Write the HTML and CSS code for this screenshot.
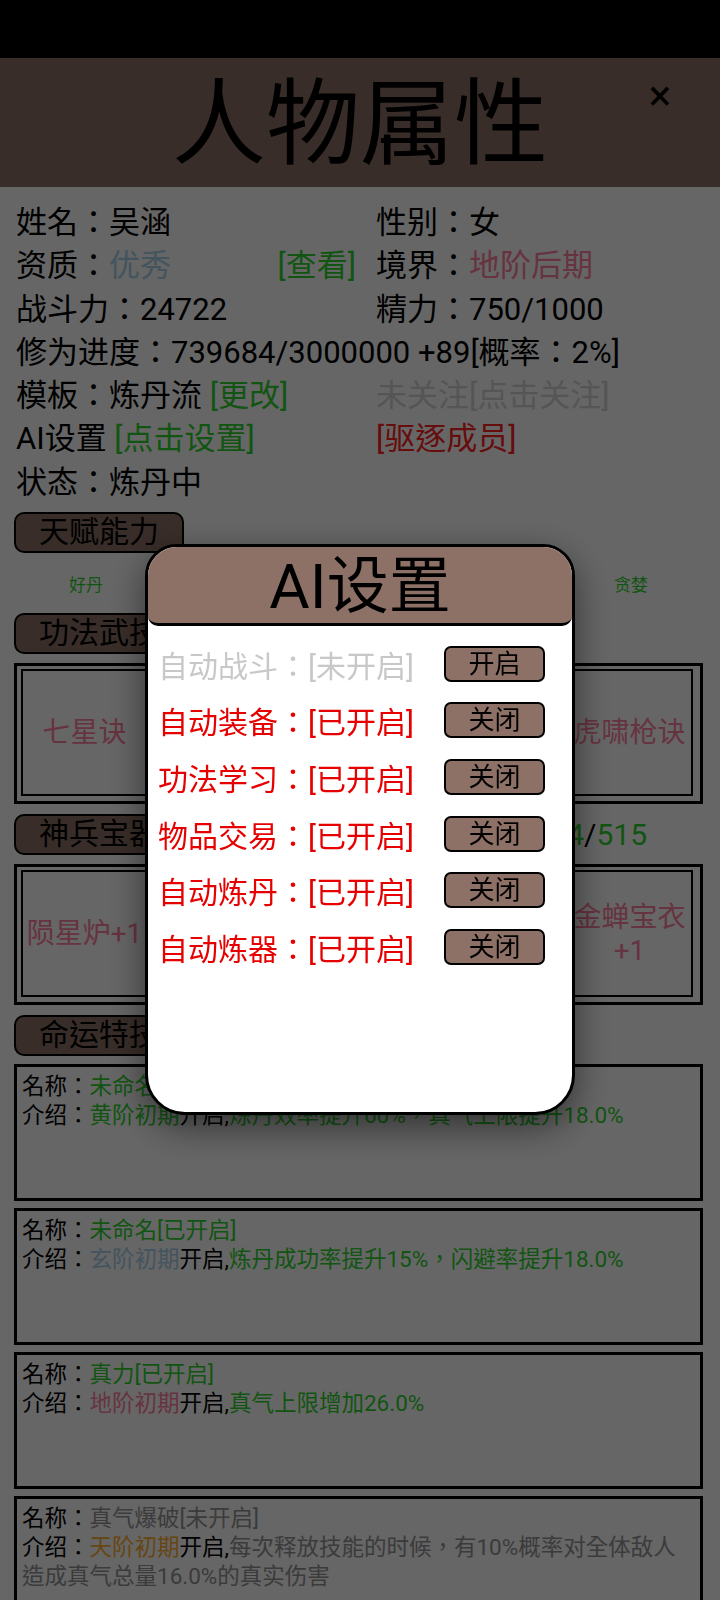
FILE: index.html
```html
<!DOCTYPE html>
<html lang="zh-TW">
<head>
    <meta charset="UTF-8">
    <meta name="viewport" content="width=device-width, initial-scale=1.0">
    <title>人物属性</title>
    <link rel="stylesheet" href="styles.css">
</head>
<body>
    <div class="status-bar"></div>

    <div class="title-bar">
        <span></span>
        <h1 class="title">人物属性</h1>
        <span class="close">×</span>
    </div>

    <div class="scroll">
        <div class="info">
            <div>姓名：吴涵</div>
            <div>性别：女</div>
            <div class="split"><span>资质：<span class="c-blue">优秀</span></span><span class="c-green">[查看]</span></div>
            <div>境界：<span class="c-pink">地阶后期</span></div>
            <div>战斗力：24722</div>
            <div>精力：750/1000</div>
            <div class="wide">修为进度：739684/3000000 +89[概率：2%]</div>
            <div>模板：炼丹流 <span class="c-green">[更改]</span></div>
            <div class="c-light">未关注[点击关注]</div>
            <div>AI设置 <span class="c-green">[点击设置]</span></div>
            <div class="c-red">[驱逐成员]</div>
            <div>状态：炼丹中</div>
        </div>

        <div class="tab-row"><span class="tab">天赋能力</span></div>
        <div class="talents">
            <span>好丹</span>
            <span>丹心</span>
            <span>聚灵</span>
            <span>贪婪</span>
        </div>

        <div class="tab-row"><span class="tab">功法武技</span></div>
        <div class="cells">
            <div class="cell"><div class="cell-inner">七星诀</div></div>
            <div class="cell"><div class="cell-inner">流云掌</div></div>
            <div class="cell"><div class="cell-inner">太玄经</div></div>
            <div class="cell"><div class="cell-inner">虎啸枪诀</div></div>
        </div>

        <div class="tab-row">
            <span class="tab">神兵宝器</span>
            <span class="count"><span class="c-green">514</span>/<span class="c-green">515</span></span>
        </div>
        <div class="cells">
            <div class="cell"><div class="cell-inner">陨星炉+1</div></div>
            <div class="cell"><div class="cell-inner">青锋剑+1</div></div>
            <div class="cell"><div class="cell-inner">玄铁盔+1</div></div>
            <div class="cell"><div class="cell-inner">金蝉宝衣+1</div></div>
        </div>

        <div class="tab-row"><span class="tab">命运特技</span></div>
        <div class="fates">
            <div class="fate">
                <div>名称：<span class="c-green">未命名[已开启]</span></div>
                <div>介绍：<span class="c-green">黄阶初期</span>开启,<span class="c-green">炼丹效率提升60%，真气上限提升18.0%</span></div>
            </div>
            <div class="fate">
                <div>名称：<span class="c-green">未命名[已开启]</span></div>
                <div>介绍：<span class="c-blue">玄阶初期</span>开启,<span class="c-green">炼丹成功率提升15%，闪避率提升18.0%</span></div>
            </div>
            <div class="fate">
                <div>名称：<span class="c-green">真力[已开启]</span></div>
                <div>介绍：<span class="c-pink">地阶初期</span>开启,<span class="c-green">真气上限增加26.0%</span></div>
            </div>
            <div class="fate">
                <div>名称：<span class="c-gray">真气爆破[未开启]</span></div>
                <div>介绍：<span class="c-orange">天阶初期</span>开启,<span class="c-gray">每次释放技能的时候，有10%概率对全体敌人造成真气总量16.0%的真实伤害</span></div>
            </div>
        </div>
    </div>

    <div class="mask">
        <div class="dialog">
            <div class="dialog-head">AI设置</div>
            <div class="ai-list">
                <div class="ai-row off"><span>自动战斗：[未开启]</span><button class="ai-btn">开启</button></div>
                <div class="ai-row"><span>自动装备：[已开启]</span><button class="ai-btn">关闭</button></div>
                <div class="ai-row"><span>功法学习：[已开启]</span><button class="ai-btn">关闭</button></div>
                <div class="ai-row"><span>物品交易：[已开启]</span><button class="ai-btn">关闭</button></div>
                <div class="ai-row"><span>自动炼丹：[已开启]</span><button class="ai-btn">关闭</button></div>
                <div class="ai-row"><span>自动炼器：[已开启]</span><button class="ai-btn">关闭</button></div>
            </div>
        </div>
    </div>
</body>
</html>
```

FILE: styles.css
```css
* {
    box-sizing: border-box;
}
html, body {
    margin: 0;
    height: 100%;
    overflow: hidden;
}
body {
    font-family: Roboto, "Noto Sans CJK TC", sans-serif;
    background: #fff;
    color: #000;
}

.status-bar {
    height: 58px;
    background: #000;
}

.title-bar {
    height: 129px;
    background: #8d7166;
    display: grid;
    grid-template-columns: 1fr auto 1fr;
}
.title {
    margin: 0;
    padding-top: 6px;
    font-size: 94px;
    font-weight: 400;
    line-height: 123px;
}
.close {
    justify-self: end;
    width: 40px;
    height: 40px;
    margin: 18px 40px 0 0;
    font-size: 42px;
    line-height: 40px;
    text-align: center;
}

.scroll {
    height: calc(100vh - 187px);
    overflow: hidden;
}

/* colours of the page text, before the dim layer */
.c-green { color: #2fd42f; }
.c-blue { color: #a8d2ea; }
.c-pink { color: #ff7fa0; }
.c-red { color: #ff2323; }
.c-light { color: #d4d4d4; }
.c-gray { color: #939393; }
.c-orange { color: #ffae2e; }

.info {
    display: grid;
    grid-template-columns: 340px 1fr;
    column-gap: 20px;
    padding: 14px 16px 0;
    font-size: 31px;
    line-height: 43.3px;
    white-space: nowrap;
}
.info .wide {
    grid-column: 1 / -1;
}
.split {
    display: flex;
    justify-content: space-between;
}

.tab-row {
    display: flex;
    align-items: center;
    margin-top: 8px;
    padding: 0 17px 0 14px;
}
.tab {
    height: 41px;
    padding: 0 23px;
    border: 2px solid #000;
    border-radius: 10px;
    background: #8d7166;
    font-size: 30px;
    line-height: 36px;
}
.count {
    margin-left: auto;
    margin-right: 56px;
    font-size: 30px;
}

.talents {
    display: flex;
    justify-content: space-between;
    align-items: center;
    height: 60px;
    padding: 0 17px 0 14px;
}
.talents span {
    width: 144px;
    text-align: center;
    font-size: 17px;
    color: #2fd42f;
}
.talents + .tab-row {
    margin-top: 0;
}

.cells {
    display: flex;
    justify-content: space-between;
    height: 141px;
    margin-top: 9px;
    padding: 0 17px 0 14px;
}
.cells + .tab-row {
    margin-top: 10px;
}
.cell {
    width: 144px;
    border: 3px solid #000;
    padding: 3px 7px 5px 4px;
}
.cell-inner {
    height: 100%;
    border: 2px solid #000;
    display: flex;
    align-items: center;
    justify-content: center;
    text-align: center;
    font-size: 28px;
    line-height: 33px;
    color: #ff7fa0;
}

.fates {
    display: flex;
    flex-direction: column;
    gap: 7px;
    margin-top: 8px;
    padding: 0 17px 0 14px;
}
.fate {
    height: 137px;
    border: 3px solid #000;
    padding: 5px;
    font-size: 22.5px;
    line-height: 29px;
}

/* dialog */
.mask {
    position: fixed;
    top: 58px;
    left: 0;
    right: 0;
    bottom: 0;
    background: rgba(0, 0, 0, 0.6);
    display: flex;
    align-items: center;
    justify-content: center;
}
.dialog {
    width: 430px;
    height: 571px;
    background: #fff;
    border: 3px solid #000;
    border-radius: 32px 32px 40px 40px;
    overflow: hidden;
    box-shadow: 0 12px 36px rgba(0, 0, 0, 0.5);
}
.dialog-head {
    height: 79px;
    background: #8d7166;
    border-bottom: 3px solid #000;
    border-radius: 0 0 10px 10px;
    text-align: center;
    font-size: 62px;
    line-height: 80px;
}
.ai-list {
    padding: 10px 27px 0 10px;
}
.ai-row {
    height: 56.6px;
    display: flex;
    align-items: center;
    justify-content: space-between;
    font-size: 30px;
    color: #e60000;
    white-space: nowrap;
}
.ai-row.off {
    color: #c8c8c8;
}
.ai-btn {
    width: 101px;
    height: 36px;
    padding: 0;
    border: 2px solid #000;
    border-radius: 7px;
    background: #8d7166;
    font-family: inherit;
    font-size: 26px;
    line-height: 1;
    color: #000;
}
```
